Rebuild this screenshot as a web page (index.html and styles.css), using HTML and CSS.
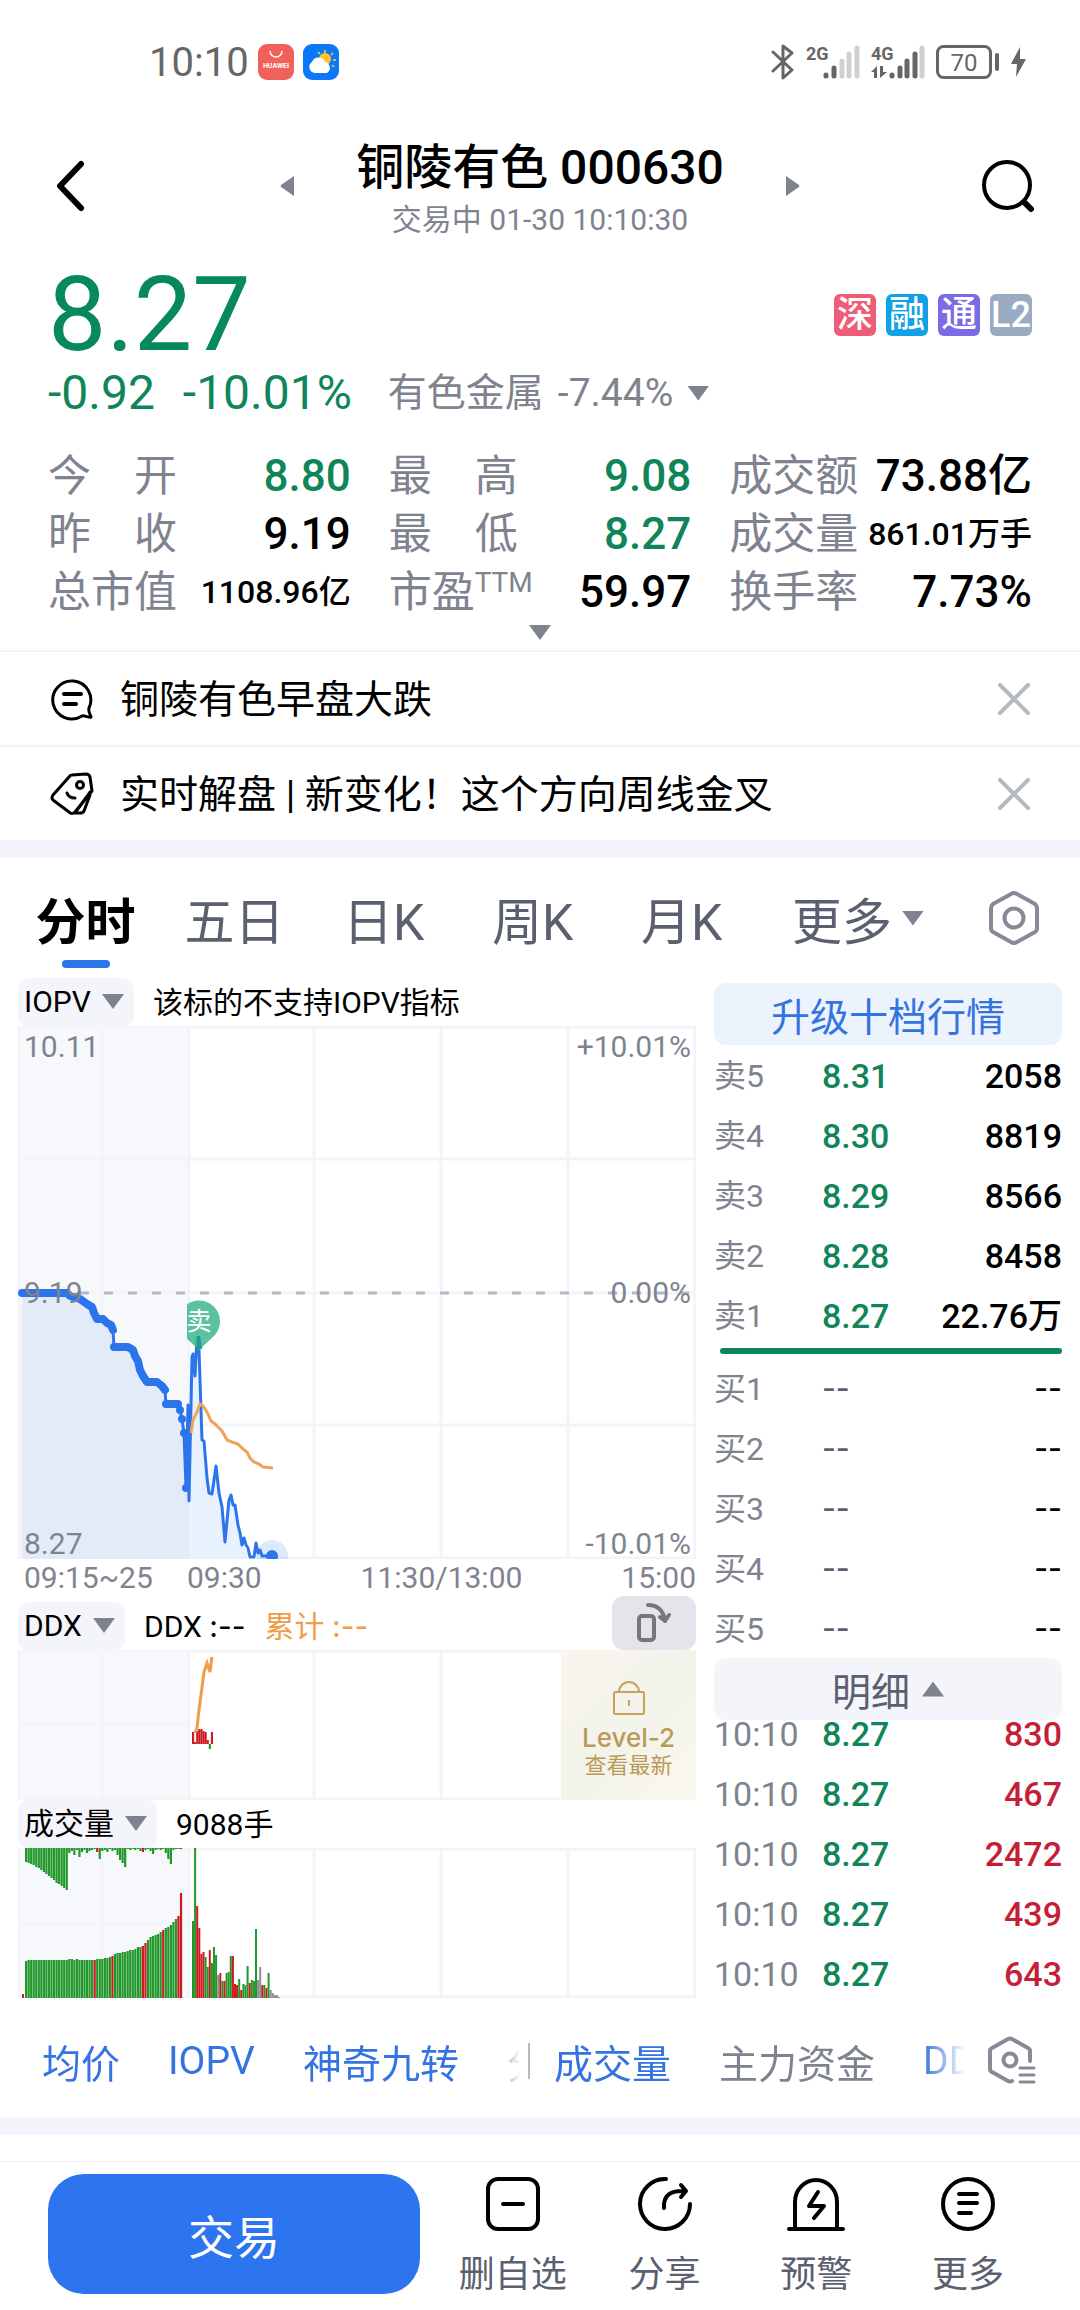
FILE: index.html
```html
<!DOCTYPE html>
<html lang="zh-Hans">
<head>
  <meta charset="UTF-8">
  <meta name="viewport" content="width=device-width, initial-scale=1">
  <title>铜陵有色 000630</title>
  <link rel="stylesheet" href="styles.css">
</head>
<body>

  <!-- 状态栏 -->
  <div class="status-bar">
    <span class="clock">10:10</span>
    <svg class="app-icon" viewBox="0 0 36 36">
      <rect width="36" height="36" rx="9" fill="#f0615c"/>
      <path d="M12 7a6 6 0 0 0 12 0" fill="none" stroke="#fff" stroke-width="1.5"/>
      <text x="18" y="24" text-anchor="middle" font-size="7" font-weight="700" fill="#fff">HUAWEI</text>
    </svg>
    <svg class="app-icon" viewBox="0 0 36 36">
      <rect width="36" height="36" rx="9" fill="#0a78f8"/>
      <path d="M22 6v3M30 9l-2 2M33 16h-3M15 8l2 2M29 21l2 2" stroke="#ffcf3a" stroke-width="1.5"/>
      <circle cx="22" cy="15" r="6" fill="#ffc42e"/>
      <path d="M12 29a6 6 0 0 1-3-11 7 7 0 0 1 13 0 6 6 0 0 1 2 11z" fill="#fff"/>
    </svg>
    <div class="status-right">
      <svg width="24" height="38" viewBox="0 0 24 38" fill="none" stroke="#666" stroke-width="3" stroke-linejoin="round" stroke-linecap="round">
        <path d="M2 9l19 18-9 8V3l9 7L2 28"/>
      </svg>
      <svg width="54" height="38" viewBox="0 0 54 38">
        <text x="0" y="17" font-size="18" font-weight="700" fill="#666">2G</text>
        <g stroke-width="5" stroke-linecap="round">
          <path d="M20 33v-1M28 33v-8" stroke="#666"/>
          <path d="M36 33V18M43 33V11M51 33V5" stroke="#d0d0d0"/>
        </g>
      </svg>
      <svg width="54" height="38" viewBox="0 0 54 38">
        <text x="0" y="17" font-size="18" font-weight="700" fill="#666">4G</text>
        <path d="M0 29l6-6v12H3v-6zM9 23h3v6h4l-7 6z" fill="#666"/>
        <g stroke-width="5" stroke-linecap="round">
          <path d="M21 33v-1M29 33v-8M36 33V18M44 33V11" stroke="#666"/>
          <path d="M51 33V5" stroke="#d0d0d0"/>
        </g>
      </svg>
      <svg width="64" height="34" viewBox="0 0 64 34">
        <rect x="1.5" y="1.5" width="53" height="31" rx="6" fill="none" stroke="#666" stroke-width="3"/>
        <rect x="59" y="8" width="4" height="18" rx="2" fill="#666"/>
        <text x="28" y="26" text-anchor="middle" font-size="24" fill="#666">70</text>
      </svg>
      <svg width="15" height="30" viewBox="0 0 15 30"><path d="M9 0L0 17h6L5 30l10-18H9z" fill="#666"/></svg>
    </div>
  </div>

  <!-- 标题 -->
  <header class="header">
    <button class="icon-btn" aria-label="返回">
      <svg width="54" height="54" viewBox="0 0 54 54"><path d="M36 5L15 27l21 22" fill="none" stroke="#000" stroke-width="6" stroke-linecap="round" stroke-linejoin="round"/></svg>
    </button>
    <div class="switcher">
      <button class="icon-btn" aria-label="上一只"><svg width="14" height="22" viewBox="0 0 14 22"><path d="M14 1v20L1 12q-1-1 0-2z" fill="#7f8390"/></svg></button>
      <div class="title">
        <h1>铜陵有色 000630</h1>
        <p>交易中 01-30 10:10:30</p>
      </div>
      <button class="icon-btn" aria-label="下一只"><svg width="14" height="22" viewBox="0 0 14 22"><path d="M0 1v20l13-9q1-1 0-2z" fill="#7f8390"/></svg></button>
    </div>
    <button class="icon-btn" aria-label="搜索">
      <svg width="54" height="54" viewBox="0 0 54 54" fill="none" stroke="#000" stroke-width="4" stroke-linecap="round"><circle cx="26" cy="26" r="23"/><path d="M43 43l7 7" stroke-width="6"/></svg>
    </button>
  </header>

  <!-- 报价 -->
  <section class="quote">
    <div class="quote-top">
      <span class="price">8.27</span>
      <div class="tags">
        <span class="tag tag-sz">深</span>
        <span class="tag tag-rong">融</span>
        <span class="tag tag-tong">通</span>
        <span class="tag tag-l2">L2</span>
      </div>
    </div>
    <div class="quote-change">
      <span class="change">-0.92</span>
      <span class="change">-10.01%</span>
      <button class="industry">有色金属 <span>-7.44%</span><i class="caret"></i></button>
    </div>
    <dl class="stats">
      <div><dt>今　开</dt><dd class="green">8.80</dd></div>
      <div><dt>最　高</dt><dd class="green">9.08</dd></div>
      <div><dt>成交额</dt><dd>73.88亿</dd></div>
      <div><dt>昨　收</dt><dd>9.19</dd></div>
      <div><dt>最　低</dt><dd class="green">8.27</dd></div>
      <div><dt>成交量</dt><dd class="small">861.01万手</dd></div>
      <div><dt>总市值</dt><dd class="small">1108.96亿</dd></div>
      <div><dt>市盈<sup>TTM</sup></dt><dd>59.97</dd></div>
      <div><dt>换手率</dt><dd>7.73%</dd></div>
    </dl>
    <button class="expand" aria-label="展开"><i class="caret"></i></button>
  </section>

  <!-- 消息 -->
  <section class="news">
    <div class="news-row">
      <svg width="44" height="44" viewBox="0 0 44 44" fill="none" stroke="#000" stroke-width="3" stroke-linecap="round" stroke-linejoin="round">
        <path d="M41 40c-4 1-6-2-9-1A19 19 0 1 1 39 31c-1 3 1 6 2 9z"/><path d="M14 17h17M14 27h12" stroke-width="4"/>
      </svg>
      <a href="#">铜陵有色早盘大跌</a>
      <button class="icon-btn" aria-label="关闭"><svg width="32" height="32" viewBox="0 0 32 32"><path d="M2 2l28 28M30 2L2 30" stroke="#b4b9c4" stroke-width="4" stroke-linecap="round"/></svg></button>
    </div>
    <div class="news-row">
      <svg width="44" height="44" viewBox="0 0 44 44" fill="none" stroke="#000" stroke-width="3" stroke-linecap="round" stroke-linejoin="round">
        <path d="M22 3l14-1q3 0 4 3l2 14L25 40q-3 3-6 0L3 28q-2-2 0-5L19 5q1-2 3-2z"/><path d="M40 23l-6 16q-1 2-4 2h-5l15-21"/><circle cx="30" cy="13" r="3.500"/><path d="M17 21c1 3 4 5 8 5"/>
      </svg>
      <a href="#">实时解盘 | 新变化！这个方向周线金叉</a>
      <button class="icon-btn" aria-label="关闭"><svg width="32" height="32" viewBox="0 0 32 32"><path d="M2 2l28 28M30 2L2 30" stroke="#b4b9c4" stroke-width="4" stroke-linecap="round"/></svg></button>
    </div>
  </section>

  <div class="divider"></div>

  <!-- 周期 -->
  <nav class="periods">
    <button class="active">分时</button>
    <button>五日</button>
    <button>日K</button>
    <button>周K</button>
    <button>月K</button>
    <button class="more">更多<i class="caret"></i></button>
    <button aria-label="设置">
      <svg width="52" height="56" viewBox="0 0 52 56" fill="none" stroke="#868a96" stroke-width="4" stroke-linejoin="round"><path d="M23 4q3-2 6 0l18 10q2 2 2 4v20q0 3-2 4L29 52q-3 2-6 0L5 42q-2-1-2-4V18q0-2 2-4z"/><circle cx="26" cy="28" r="9.500"/></svg>
    </button>
  </nav>

  <main class="market">
    <div class="charts">
      <div class="chart-head">
        <span class="picker"><select aria-label="主图指标"><option>IOPV</option></select><i class="caret"></i></span>
        <span>该标的不支持IOPV指标</span>
      </div>

      <div class="chart">
        <svg viewBox="0 0 678 533">
          <defs>
            <clipPath id="session"><rect x="169" y="0" width="509" height="533"/></clipPath>
          </defs>
          <rect class="shade" width="171" height="533"/>
          <path class="grid" d="M1 1H677V532H1zM84 0V533M171 0V533M296 0V533M423 0V533M550 0V533M0 133H678M0 267H678M0 399H678"/>
          <path d="M0 267H678" stroke="#b5b9c3" stroke-width="3" stroke-dasharray="9 15" stroke-dashoffset="10"/>
          <path fill="#dce6f8" fill-opacity=".7" d="M4 267H49L62 273L74 281L79 293L93 299L96 321H110L117 330L125 350L129 356H139L147 364L148 378H160L166 407L168 462L170 379L171 470V533H4z"/>
          <path fill="#e8f2fe" d="M171 440L175 328L181 324L184 414L189 452L194 468L198 440L204 481L207 516L213 469L217 479L224 519L232 531H254V533H171z"/>
          <g fill="none" stroke="#2c74ec" stroke-linejoin="round" stroke-linecap="round">
            <path stroke-width="3" d="M95 304L96 321M147 364L148 378M160 378L162 384L164 393L166 407L168 462L170 379L171 475L174 331L175 328L177 350L179 311L181 324L184 414L186 415L189 452L191 467L194 468L198 440L201 467L204 481L207 516L211 474L213 469L215 479H217L220 499L222 507L224 519L226 512L228 519L230 522L232 531H236L238 517L240 527L242 524L244 530H254"/>
            <path stroke-width="8" d="M4 267H49L52 270L62 273L69 278L74 281L76 287L79 293H85L89 297L93 299L95 304M96 321H110L115 324L117 330L120 335L122 344L125 350L129 356H139L144 360L147 364M148 378H160M162 384h0M164 393h0M166 407h0M168 462h0"/>
          </g>
          <path fill="none" stroke="#eea35a" stroke-width="3" d="M173 407L175 394L179 386L182 378L185 380L189 386L193 395L197 398L200 401L204 405L209 414L214 416L220 418L225 423L229 426L232 432L236 436L241 438L245 441L255 442"/>
          <g clip-path="url(#session)">
            <path d="M181 324L165 309A21 21 0 1 1 197 309z" fill="#4cbd98" fill-opacity=".93"/>
            <path d="M178 323L179 310L182 310L184 323z" fill="#219b95"/>
            <text x="181" y="304" text-anchor="middle" font-size="25" fill="#fff">卖</text>
          </g>
          <circle cx="254" cy="530" r="16" fill="#2c74ec" fill-opacity=".16"/>
          <circle cx="254" cy="530" r="6" fill="#2c74ec"/>
        </svg>
        <span class="tick top left">10.11</span>
        <span class="tick top right">+10.01%</span>
        <span class="tick mid left">9.19</span>
        <span class="tick mid right">0.00%</span>
        <span class="tick bottom left">8.27</span>
        <span class="tick bottom right">-10.01%</span>
      </div>
      <div class="time-axis">
        <span class="auction">09:15~25</span>
        <span>09:30</span>
        <span>11:30/13:00</span>
        <span>15:00</span>
      </div>

      <div class="chart-head">
        <span class="picker"><select aria-label="副图一"><option>DDX</option></select><i class="caret"></i></span>
        <span>DDX <span class="dash">:--</span></span>
        <span class="orange">累计 <span class="dash">:--</span></span>
        <button class="rotate" aria-label="横屏">
          <svg width="36" height="40" viewBox="0 0 36 40" fill="none" stroke="#777" stroke-width="4" stroke-linecap="round" stroke-linejoin="round"><rect x="3" y="13" width="15" height="24" rx="3"/><path d="M12 2c10 0 15 5 17 15M24 14l5 4 4-6"/></svg>
        </button>
      </div>
      <div class="chart">
        <svg viewBox="0 0 678 150">
          <rect class="shade" width="171" height="150"/>
          <path class="grid" d="M1 1H677V149H1zM84 0V150M171 0V150M296 0V150M423 0V150M550 0V150M0 75H171"/>
          <g id="ddx-bars"></g>
          <path fill="none" stroke="#f09c4a" stroke-width="3" d="M177 83L179 78L181 60L186 22L189 13L192 22L194 7"/>
        </svg>
        <a class="level2" href="#">
          <svg width="34" height="38" viewBox="0 0 34 38" fill="none" stroke="#c9a25a" stroke-width="2"><rect x="2" y="12" width="30" height="22" rx="1"/><path d="M7 12a10 10 0 0 1 20 0M17 20v6"/></svg>
          <strong>Level-2</strong>
          <span>查看最新</span>
        </a>
      </div>

      <div class="chart-head">
        <span class="picker"><select aria-label="副图二"><option>成交量</option></select><i class="caret"></i></span>
        <span>9088手</span>
      </div>
      <div class="chart">
        <svg viewBox="0 0 678 150">
          <rect class="shade" width="171" height="150"/>
          <path class="grid" d="M1 1H677V149H1zM84 0V150M171 0V150M296 0V150M423 0V150M550 0V150M0 75H171"/>
          <g id="volume-bars"></g>
        </svg>
      </div>
    </div>

    <!-- 盘口 -->
    <aside class="book">
      <button class="upgrade">升级十档行情</button>
      <table>
        <tr><th>卖5</th><td>8.31</td><td>2058</td></tr>
        <tr><th>卖4</th><td>8.30</td><td>8819</td></tr>
        <tr><th>卖3</th><td>8.29</td><td>8566</td></tr>
        <tr><th>卖2</th><td>8.28</td><td>8458</td></tr>
        <tr><th>卖1</th><td>8.27</td><td>22.76万</td></tr>
      </table>
      <div class="ratio"></div>
      <table class="empty">
        <tr><th>买1</th><td>--</td><td>--</td></tr>
        <tr><th>买2</th><td>--</td><td>--</td></tr>
        <tr><th>买3</th><td>--</td><td>--</td></tr>
        <tr><th>买4</th><td>--</td><td>--</td></tr>
        <tr><th>买5</th><td>--</td><td>--</td></tr>
      </table>
      <button class="detail-btn">明细<i class="caret up"></i></button>
      <table class="trades">
        <tr><th>10:10</th><td>8.27</td><td>830</td></tr>
        <tr><th>10:10</th><td>8.27</td><td>467</td></tr>
        <tr><th>10:10</th><td>8.27</td><td>2472</td></tr>
        <tr><th>10:10</th><td>8.27</td><td>439</td></tr>
        <tr><th>10:10</th><td>8.27</td><td>643</td></tr>
      </table>
    </aside>
  </main>

  <!-- 指标 -->
  <div class="indicators">
    <div class="scroll main-list">
      <button>均价</button>
      <button>IOPV</button>
      <button>神奇九转</button>
      <button class="off">分</button>
    </div>
    <div class="scroll sub-list">
      <button>成交量</button>
      <button class="off">主力资金</button>
      <button>DD</button>
    </div>
    <button class="icon-btn" aria-label="指标设置">
      <svg width="50" height="50" viewBox="0 0 50 50" fill="none" stroke="#868a96" stroke-width="4" stroke-linecap="round" stroke-linejoin="round"><path d="M44 25V15q0-2-2-3L26 3q-2-1-4 0L6 12q-2 1-2 3v18q0 2 2 3l16 9q2 1 4 0"/><circle cx="24" cy="24" r="6.500"/><path d="M34 32h14M34 39h14M34 46h14" stroke-width="3"/></svg>
    </button>
  </div>

  <div class="divider"></div>

  <!-- 底部操作 -->
  <footer class="toolbar">
    <button class="trade">交易</button>
    <button class="tool">
      <svg viewBox="0 0 58 54"><rect x="4" y="2" width="50" height="50" rx="10"/><path d="M19 27h20"/></svg>
      删自选
    </button>
    <button class="tool">
      <svg viewBox="0 0 58 54"><path d="M30 2A25 25 0 1 0 54 27"/><path d="M28 31c-1-12 6-18 21-17M45 8l5 6-5 6"/></svg>
      分享
    </button>
    <button class="tool">
      <svg viewBox="0 0 58 54"><path d="M8 51V25a21 22 0 0 1 42 0V51M2 52H56M31 15L22 29H37L27 41"/></svg>
      预警
    </button>
    <button class="tool">
      <svg viewBox="0 0 58 54"><circle cx="29" cy="27" r="25"/><path d="M20 17h18M20 26h18M20 36h12"/></svg>
      更多
    </button>
  </footer>

  <script src="script.js"></script>
</body>
</html>
```

FILE: styles.css
```css
* {
  box-sizing: border-box;
}

body {
  margin: 0;
  background: #fff;
  color: #000;
  font-family: Roboto, "Noto Sans CJK SC", sans-serif;
}

button {
  padding: 0;
  border: 0;
  background: none;
  color: inherit;
  font: inherit;
}

a {
  color: inherit;
  text-decoration: none;
}

svg {
  display: block;
  flex: none;
}

.green {
  color: #0f8559;
}

.orange {
  color: #f09c4a;
}

.dash {
  font-family: Inter, sans-serif;
}

.caret {
  display: inline-block;
  width: 22px;
  height: 15px;
  background: #7f8390;
  clip-path: polygon(0 0, 100% 0, 50% 100%);
}

.caret.up {
  clip-path: polygon(50% 0, 100% 100%, 0 100%);
}

/* 状态栏 */
.status-bar {
  display: flex;
  align-items: center;
  gap: 9px;
  height: 124px;
  padding: 0 54px 0 149px;
}

.clock {
  font-size: 40px;
  color: #666;
}

.app-icon {
  width: 36px;
  height: 36px;
}

.status-right {
  display: flex;
  align-items: center;
  gap: 11px;
  margin-left: auto;
}

/* 标题 */
.header {
  display: flex;
  align-items: center;
  justify-content: space-between;
  height: 124px;
  padding: 0 45px;
}

.switcher {
  display: flex;
  align-items: center;
  justify-content: space-between;
  width: 520px;
}

.title {
  padding-top: 6px;
  text-align: center;
  color: #7f8390;
  font-size: 30px;
  line-height: 42px;
}

.title h1 {
  margin: 0;
  color: #000;
  font-size: 48px;
  font-weight: 500;
  line-height: 62px;
}

.title p {
  margin: 0;
}

/* 报价 */
.quote {
  display: flex;
  flex-direction: column;
  padding: 7px 48px 0;
}

.quote-top {
  display: flex;
  align-items: center;
  justify-content: space-between;
  height: 120px;
}

.price {
  color: #06895c;
  font-size: 104px;
  line-height: 120px;
}

.tags {
  display: flex;
  gap: 10px;
}

.tag {
  width: 42px;
  height: 42px;
  border-radius: 6px;
  color: #fff;
  font-size: 36px;
  font-weight: 500;
  line-height: 42px;
  text-align: center;
}

.tag-sz { background: #ee5c78; }
.tag-rong { background: #12a0e6; }
.tag-tong { background: #7b6be4; }
.tag-l2 { background: #99aac3; }

.quote-change {
  display: flex;
  align-items: center;
  gap: 28px;
  height: 36px;
  line-height: 36px;
}

.change {
  color: #0f8559;
  font-size: 48px;
}

.industry {
  display: flex;
  align-items: center;
  gap: 14px;
  margin-left: 8px;
  color: #7f8390;
  font-size: 39px;
  line-height: 36px;
}

.stats {
  display: grid;
  grid-template-columns: repeat(3, 1fr);
  column-gap: 38px;
  margin: 36px 0 0;
}

.stats div {
  display: flex;
  justify-content: space-between;
  height: 58px;
  line-height: 58px;
  white-space: nowrap;
}

.stats dt {
  color: #7f8390;
  font-size: 43px;
}

.stats dd {
  margin: 0;
  font-size: 44px;
  font-weight: 500;
}

.stats dd.small {
  font-size: 32px;
}

.stats sup {
  font-size: 28px;
  line-height: 0;
}

.expand {
  display: flex;
  align-self: center;
  height: 29px;
  padding-top: 4px;
}

/* 消息 */
.news-row {
  display: flex;
  align-items: center;
  gap: 26px;
  height: 95px;
  padding: 0 50px;
  border-top: 2px solid #f3f4f6;
  font-size: 39px;
}

.news-row a {
  padding-bottom: 5px;
}

.news-row .icon-btn {
  margin-left: auto;
}

.divider {
  height: 18px;
  background: #f4f5fa;
}

/* 周期 */
.periods {
  display: grid;
  grid-template-columns: repeat(5, 11fr) 15fr 8fr;
  justify-items: center;
  height: 120px;
  padding: 0 12px 0 11px;
  color: #5b6070;
  font-size: 50px;
}

.periods .active {
  position: relative;
  color: #000;
  font-weight: 700;
}

.periods .active::after {
  content: "";
  position: absolute;
  left: 50%;
  bottom: 10px;
  width: 48px;
  height: 8px;
  margin-left: -24px;
  border-radius: 4px;
  background: #2c74ec;
}

.periods .more {
  display: flex;
  align-items: center;
  gap: 10px;
}

/* 行情 */
.market {
  display: flex;
  gap: 18px;
  padding: 0 18px;
}

.charts {
  flex: 1;
  min-width: 0;
}

.chart-head {
  display: flex;
  align-items: flex-end;
  gap: 19px;
  font-size: 30px;
  line-height: 46px;
}

.picker {
  position: relative;
  border-radius: 10px;
  background: #f4f5fa;
}

.picker select {
  display: block;
  height: 48px;
  padding: 0 43px 0 6px;
  border: 0;
  appearance: none;
  background: none;
  color: #000;
  font: inherit;
}

.picker .caret {
  position: absolute;
  right: 10px;
  top: 16px;
  pointer-events: none;
}

.chart {
  position: relative;
}

.chart > svg {
  width: 100%;
  height: auto;
}

.shade {
  fill: #f6f8fc;
}

.grid {
  fill: none;
  stroke: #f3f4f9;
  stroke-width: 3;
}

.tick {
  position: absolute;
  color: #7f8390;
  font-size: 30px;
  line-height: 30px;
}

.tick.left { left: 6px; }
.tick.right { right: 5px; }
.tick.top { top: 6px; }
.tick.mid { top: 50%; margin-top: -15px; }
.tick.bottom { bottom: 0; }

.time-axis {
  display: flex;
  justify-content: space-between;
  height: 37px;
  color: #7f8390;
  font-size: 30px;
  line-height: 37px;
}

.time-axis .auction {
  width: 170px;
  padding-left: 6px;
  margin-right: -100px;
}

.rotate {
  display: flex;
  align-items: center;
  justify-content: center;
  width: 84px;
  height: 54px;
  margin-left: auto;
  border-radius: 12px;
  background: #e4e5ea;
}

.level2 {
  position: absolute;
  top: 0;
  right: 0;
  bottom: 0;
  display: flex;
  flex-direction: column;
  align-items: center;
  width: 135px;
  padding-top: 30px;
  background: linear-gradient(135deg, #faf5ee, #f2f3ea 50%, #fbf7ef);
  color: #bb9a58;
  font-size: 22px;
  line-height: 28px;
}

.level2 strong {
  margin-top: 6px;
  font-family: Inter, sans-serif;
  font-size: 26px;
  font-weight: 500;
}

/* 盘口 */
.book {
  width: 348px;
  padding-top: 5px;
}

.upgrade,
.detail-btn {
  display: flex;
  align-items: center;
  justify-content: center;
  gap: 12px;
  width: 100%;
  height: 62px;
  border-radius: 12px;
  font-size: 39px;
}

.upgrade {
  background: #ecf3fd;
  color: #3473e0;
}

.detail-btn {
  background: #f4f5fa;
  color: #5b6070;
}

.book table {
  width: 100%;
  border-collapse: collapse;
  table-layout: fixed;
}

.book th,
.book td {
  height: 60px;
  padding: 2px 0 0;
  font-size: 34px;
  font-weight: 500;
  line-height: 40px;
  text-align: right;
}

.book th {
  width: 108px;
  color: #7f8390;
  font-size: 32px;
  font-weight: 400;
  text-align: left;
}

.book td:nth-child(2) {
  width: 90px;
  color: #0f8559;
  text-align: left;
}

.book .empty td {
  padding: 0;
  font-family: Inter, sans-serif;
  font-size: 30px;
}

.book .empty td:nth-child(2) {
  color: #5b6070;
}

.ratio {
  height: 6px;
  margin: 3px 0 4px 6px;
  border-radius: 3px;
  background: #0b875b;
}

.book .trades {
  margin-top: -17px;
}

.book .trades th {
  font-size: 34px;
}

.trades td:last-child {
  color: #c51f37;
}

/* 指标 */
.indicators {
  display: flex;
  align-items: center;
  height: 114px;
  padding: 2px 44px 0 42px;
  color: #3473e0;
  font-size: 39px;
}

.scroll {
  display: flex;
  gap: 48px;
  overflow: hidden;
  white-space: nowrap;
}

.scroll button {
  flex: none;
}

.scroll .off {
  color: #7f8390;
}

.main-list {
  flex: 478;
  -webkit-mask-image: linear-gradient(to right, #000 95%, transparent);
  mask-image: linear-gradient(to right, #000 95%, transparent);
}

.sub-list {
  flex: 412;
  margin-left: 8px;
  padding-left: 26px;
  background: linear-gradient(#b4b9c4, #b4b9c4) left center / 2px 36px no-repeat;
  -webkit-mask-image: linear-gradient(to right, #000 90%, transparent);
  mask-image: linear-gradient(to right, #000 90%, transparent);
}

.indicators .icon-btn {
  margin-left: 20px;
}

/* 底部操作 */
.toolbar {
  display: flex;
  margin-top: 26px;
  padding: 12px 36px 14px 48px;
  border-top: 1px solid #eff0f3;
}

.trade {
  width: 372px;
  height: 120px;
  margin-right: 17px;
  border-radius: 36px;
  background: #2c75ef;
  color: #fff;
  font-size: 46px;
}

.tool {
  display: flex;
  flex: 1;
  flex-direction: column;
  align-items: center;
  justify-content: space-between;
  padding-top: 3px;
  color: #5b6070;
  font-size: 36px;
  line-height: 38px;
}

.tool svg {
  width: 58px;
  height: 54px;
  fill: none;
  stroke: #000;
  stroke-width: 4;
  stroke-linecap: round;
  stroke-linejoin: round;
}
```

FILE: script.js
```js
const COLORS = { g: '#22972a', r: '#cf1820', x: '#8a8f99' };

function bar(group, x, y, w, h, color) {
  const rect = document.createElementNS('http://www.w3.org/2000/svg', 'rect');
  rect.setAttribute('x', x);
  rect.setAttribute('y', y);
  rect.setAttribute('width', w);
  rect.setAttribute('height', h);
  rect.setAttribute('fill', COLORS[color]);
  group.appendChild(rect);
}

// DDX，负数向下
const ddx = document.getElementById('ddx-bars');
[12, 2, 13, 15, 15, 13, 12, 4, -5, 12].forEach(function (v, i) {
  bar(ddx, 174 + i * 2.1, v > 0 ? 94 - v : 94, 2.1, Math.abs(v), v > 0 ? 'r' : 'g');
});

const volume = document.getElementById('volume-bars');

// 集合竞价：匹配量（下）与未匹配量（上）
const matched = [
  37, 38, 38, 38, 38, 38, 38, 38, 38, 38, 38, 38, 38, 38, 38, 38, 38, 39, 39, 38,
  39, 38, 38, 38, 38, 38, 38, 38, 39, 39, 39, 40, 40, 41, 42, 44, 45, 45, 46, 46,
  47, 48, 48, 49, 51, 51, 52, 55, 58, 61, 62, 63, 64, 66, 68, 70, 71, 73, 76, 79, 82, 105
];
const unmatched = [
  14, 15, 16, 17, 19, 20, 22, 24, 26, 28, 30, 32, 35, 36, 38, 40, 42, 5, 3, 7,
  2, 9, 4, 2, 5, 3, 2, 1, 4, 11, 3, 2, 4, 1, 3, 2, 7, 12, 15, 19, 1, 2, 1, 2,
  1, 3, 4, 2, 1, 3, 6, 2, 1, 2, 1, 5, 11, 16, 2, 1, 1, 1
];
const redMatched = [27, 34, 46, 47, 54, 60, 61];
bar(volume, 4, 146, 2, 4, 'r');
matched.forEach(function (v, i) {
  bar(volume, 7 + i * 2.54, 150 - v, 2.2, v, redMatched.includes(i) ? 'r' : 'g');
});
unmatched.forEach(function (v, i) {
  bar(volume, 7 + i * 2.54, 0, 2.2, v, [28, 46, 61].includes(i) ? 'r' : 'g');
});

// 连续竞价
const session = [
  [77, 'g'], [150, 'g'], [92, 'r'], [70, 'r'], [44, 'r'], [46, 'r'], [41, 'g'], [31, 'g'],
  [48, 'r'], [35, 'g'], [51, 'g'], [43, 'g'], [23, 'x'], [25, 'r'], [17, 'g'], [17, 'r'],
  [25, 'g'], [26, 'g'], [42, 'g'], [42, 'r'], [14, 'r'], [13, 'r'], [19, 'g'], [8, 'r'],
  [14, 'g'], [13, 'g'], [32, 'g'], [15, 'r'], [18, 'g'], [17, 'g'], [69, 'g'], [18, 'x'],
  [31, 'x'], [13, 'r'], [13, 'g'], [10, 'r'], [25, 'g'], [8, 'x'], [5, 'x'], [3, 'x'],
  [3, 'x'], [1, 'x']
];
session.forEach(function (d, i) {
  bar(volume, 174 + i * 2.1, 150 - d[0], 2, d[0], d[1]);
});
```
